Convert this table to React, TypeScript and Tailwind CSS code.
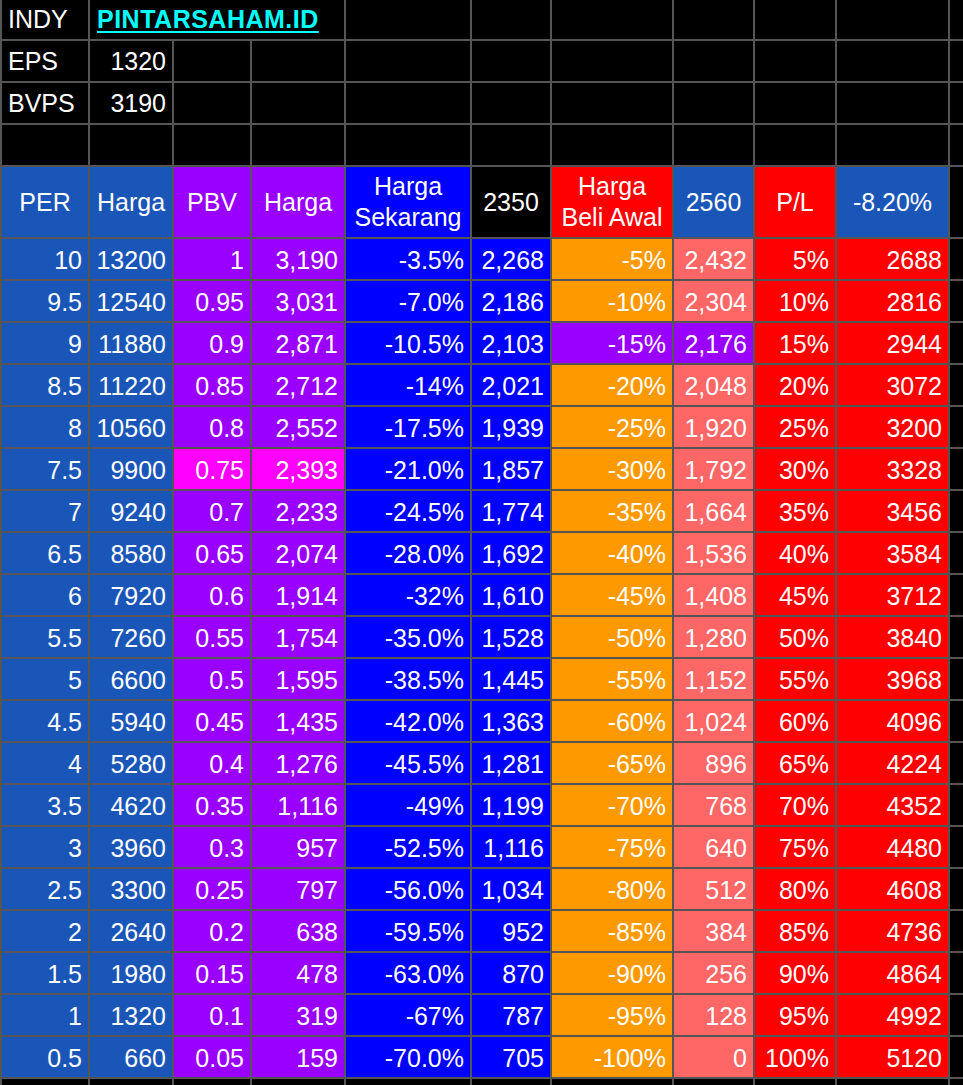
const BLUE = 'bg-[#1a55b8]';
const PURPLE = 'bg-[#9900ff]';
const MAGENTA = 'bg-[#ff00ff]';
const PURE_BLUE = 'bg-[#0000ff]';
const ORANGE = 'bg-[#ff9900]';
const PINK = 'bg-[#ff6666]';
const RED = 'bg-[#ff0000]';

const rows = [
  ['10', '13200', '1', '3,190', '-3.5%', '2,268', '-5%', '2,432', '5%', '2688'],
  ['9.5', '12540', '0.95', '3,031', '-7.0%', '2,186', '-10%', '2,304', '10%', '2816'],
  ['9', '11880', '0.9', '2,871', '-10.5%', '2,103', '-15%', '2,176', '15%', '2944'],
  ['8.5', '11220', '0.85', '2,712', '-14%', '2,021', '-20%', '2,048', '20%', '3072'],
  ['8', '10560', '0.8', '2,552', '-17.5%', '1,939', '-25%', '1,920', '25%', '3200'],
  ['7.5', '9900', '0.75', '2,393', '-21.0%', '1,857', '-30%', '1,792', '30%', '3328'],
  ['7', '9240', '0.7', '2,233', '-24.5%', '1,774', '-35%', '1,664', '35%', '3456'],
  ['6.5', '8580', '0.65', '2,074', '-28.0%', '1,692', '-40%', '1,536', '40%', '3584'],
  ['6', '7920', '0.6', '1,914', '-32%', '1,610', '-45%', '1,408', '45%', '3712'],
  ['5.5', '7260', '0.55', '1,754', '-35.0%', '1,528', '-50%', '1,280', '50%', '3840'],
  ['5', '6600', '0.5', '1,595', '-38.5%', '1,445', '-55%', '1,152', '55%', '3968'],
  ['4.5', '5940', '0.45', '1,435', '-42.0%', '1,363', '-60%', '1,024', '60%', '4096'],
  ['4', '5280', '0.4', '1,276', '-45.5%', '1,281', '-65%', '896', '65%', '4224'],
  ['3.5', '4620', '0.35', '1,116', '-49%', '1,199', '-70%', '768', '70%', '4352'],
  ['3', '3960', '0.3', '957', '-52.5%', '1,116', '-75%', '640', '75%', '4480'],
  ['2.5', '3300', '0.25', '797', '-56.0%', '1,034', '-80%', '512', '80%', '4608'],
  ['2', '2640', '0.2', '638', '-59.5%', '952', '-85%', '384', '85%', '4736'],
  ['1.5', '1980', '0.15', '478', '-63.0%', '870', '-90%', '256', '90%', '4864'],
  ['1', '1320', '0.1', '319', '-67%', '787', '-95%', '128', '95%', '4992'],
  ['0.5', '660', '0.05', '159', '-70.0%', '705', '-100%', '0', '100%', '5120'],
];

const dataColors = [BLUE, BLUE, PURPLE, PURPLE, PURE_BLUE, PURE_BLUE, ORANGE, PINK, RED, RED];

function colorFor(row: number, col: number) {
  if (row === 5 && (col === 2 || col === 3)) return MAGENTA;
  if (row === 2 && (col === 6 || col === 7)) return PURPLE;
  return dataColors[col];
}

function Empty({ n }: { n: number }) {
  return (
    <>
      {Array.from({ length: n }).map((_, i) => (
        <div key={i} className="bg-black" />
      ))}
    </>
  );
}

function Head({ children, color }: { children: React.ReactNode; color: string }) {
  return (
    <div className={`${color} flex items-center justify-center text-center leading-[31px]`}>
      <div>{children}</div>
    </div>
  );
}

export default function App() {
  return (
    <div
      className="w-[963px] h-[1085px] bg-black overflow-hidden text-white text-[25px]"
      style={{ fontFamily: '"Liberation Sans", Arial, sans-serif' }}
    >
      <div className="grid w-max grid-cols-[86px_82px_76px_92px_124px_78px_120px_79px_80px_111px_40px] grid-rows-[39px_40px_40px_40px_70px_repeat(21,40px)] gap-[2px] bg-[#555555] pl-[2px]">
        {/* top info rows */}
        <div className="bg-black flex items-center pl-[6px] pt-[1px]">INDY</div>
        <div className="col-span-3 bg-black flex items-center pl-[7px] pt-[1px]">
          <span className="font-bold tracking-[0.5px] text-[#00ffff] underline decoration-2 underline-offset-[3px]">
            PINTARSAHAM.ID
          </span>
        </div>
        <Empty n={7} />

        <div className="bg-black flex items-center pl-[6px] pt-[1px]">EPS</div>
        <div className="bg-black flex items-center justify-end pr-[6px] pt-[1px]">1320</div>
        <Empty n={9} />

        <div className="bg-black flex items-center pl-[6px] pt-[1px]">BVPS</div>
        <div className="bg-black flex items-center justify-end pr-[6px] pt-[1px]">3190</div>
        <Empty n={9} />

        <Empty n={11} />

        {/* header */}
        <Head color={BLUE}>PER</Head>
        <Head color={BLUE}>Harga</Head>
        <Head color={PURPLE}>PBV</Head>
        <Head color={PURPLE}>Harga</Head>
        <Head color={PURE_BLUE}>
          Harga
          <br />
          Sekarang
        </Head>
        <Head color="bg-black">2350</Head>
        <Head color={RED}>
          Harga
          <br />
          Beli Awal
        </Head>
        <Head color={BLUE}>2560</Head>
        <Head color={RED}>P/L</Head>
        <Head color={BLUE}>-8.20%</Head>
        <div className="bg-black" />

        {/* data */}
        {rows.map((r, ri) => (
          <div key={ri} className="contents">
            {r.map((v, ci) => (
              <div
                key={ci}
                className={`${colorFor(ri, ci)} flex items-center justify-end pr-[6px] pt-[3px]`}
              >
                {v}
              </div>
            ))}
            <div className="bg-black" />
          </div>
        ))}

        <Empty n={11} />
      </div>
    </div>
  );
}
